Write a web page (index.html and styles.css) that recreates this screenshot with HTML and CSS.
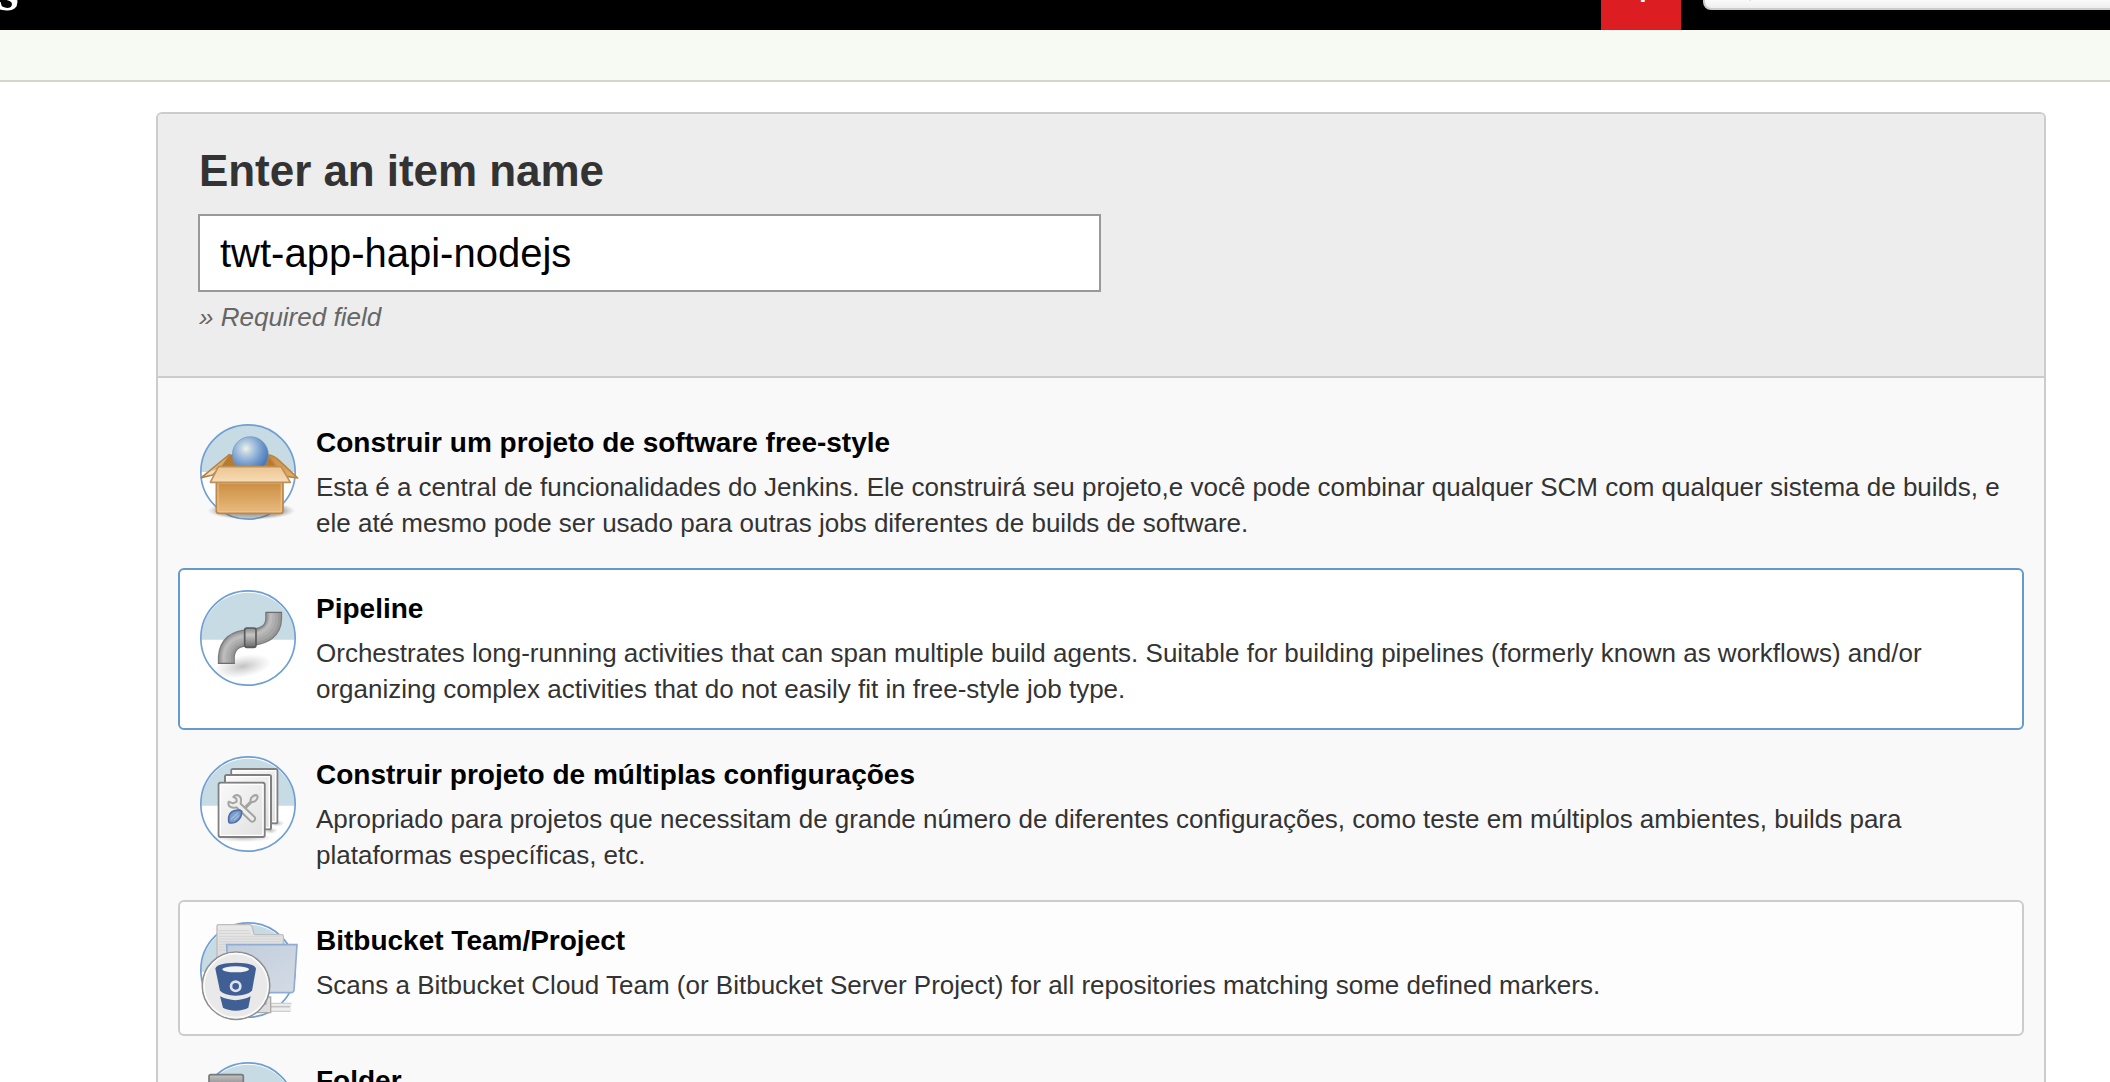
FILE: index.html
```html
<!DOCTYPE html>
<html lang="pt-BR">
<head>
<meta charset="utf-8">
<title>New Item [Jenkins]</title>
<link rel="stylesheet" href="styles.css">
</head>
<body>
<header class="topbar">
  <span class="brand">s</span>
  <span class="alerts">1</span>
  <div class="search">
    <svg class="search-icon" width="34" height="34" viewBox="0 0 34 34"><circle cx="14" cy="14" r="9" fill="none" stroke="#bbb" stroke-width="4"/><path d="M21 21l9 9" stroke="#bbb" stroke-width="5"/></svg>
  </div>
</header>
<div class="breadcrumbs"></div>
<main class="panel">
  <section class="name-section">
    <h1 class="heading"><span>Enter an item name</span></h1>
    <input class="name-input" type="text" value="twt-app-hapi-nodejs">
    <p class="hint">» Required field</p>
  </section>
  <ul class="items">
    <li class="item">
      <svg class="icon" viewBox="30 42 288 288">
        <defs>
          <linearGradient id="boxFront" x1="0" y1="0" x2="0" y2="1"><stop offset="0" stop-color="#c98b3d"/><stop offset="1" stop-color="#e9bb80"/></linearGradient>
          <linearGradient id="flap" x1="0" y1="0" x2="0" y2="1"><stop offset="0" stop-color="#ecc592"/><stop offset="1" stop-color="#f6dcb6"/></linearGradient>
          <linearGradient id="flapSide" x1="0" y1="0" x2="1" y2="1"><stop offset="0" stop-color="#c88a3c"/><stop offset="1" stop-color="#e2b274"/></linearGradient>
          <radialGradient id="ball" cx=".38" cy=".33" r=".75"><stop offset="0" stop-color="#f0f3e4"/><stop offset=".22" stop-color="#b9cfe2"/><stop offset=".6" stop-color="#7099cc"/><stop offset="1" stop-color="#3c68a8"/></radialGradient>
          <radialGradient id="shadow"><stop offset="0" stop-color="#333" stop-opacity=".6"/><stop offset=".75" stop-color="#555" stop-opacity=".4"/><stop offset="1" stop-color="#777" stop-opacity="0"/></radialGradient>
        </defs>
        <circle cx="174" cy="186" r="141" fill="#fff"/>
        <path d="M33 186a141 141 0 0 1 282 0z" fill="#c7dbe4"/>
        <circle cx="174" cy="186" r="141.500" fill="none" stroke="#6f9fd3" stroke-width="5"/>
        <ellipse cx="184" cy="302" rx="132" ry="27" fill="url(#shadow)"/>
        <path d="M118 136h117l42 48H78z" fill="#b67a30" stroke="#b67a30" stroke-width="5"/>
        <path d="M118 134L34 203l34-8 22-22z" fill="#f2dcbe" stroke="#b58147" stroke-width="5" stroke-linejoin="round"/>
        <path d="M116 138l-52 46 28-12z" fill="#d9a866"/>
        <path d="M233 135q18 0 34 16l56 53-34-5-30-27z" fill="url(#flapSide)" stroke="#b9843f" stroke-width="5" stroke-linejoin="round"/>
        <circle cx="181" cy="134" r="54" fill="url(#ball)" stroke="#7094bd" stroke-width="2"/>
        <path d="M79 212h200v90q0 8-8 8H87q-8 0-8-8z" fill="url(#boxFront)" stroke="#bd8848" stroke-width="5"/>
        <path d="M84 219h190v84q0 2-4 2H90q-6 0-6-4z" fill="none" stroke="#efc893" stroke-width="4" opacity=".65"/>
        <path d="M85 170h188l28 47H61z" fill="url(#flap)" stroke="#bf9158" stroke-width="5" stroke-linejoin="round"/>
      </svg>
      <div class="copy"><h2 class="title"><span>Construir um projeto de software free-style</span></h2>
      <p class="desc"><span>Esta é a central de funcionalidades do Jenkins. Ele construirá seu projeto,e você pode combinar qualquer SCM com qualquer sistema de builds, e</span><br><span>ele até mesmo pode ser usado para outras jobs diferentes de builds de software.</span></p></div>
    </li>
    <li class="item selected">
      <svg class="icon" viewBox="30 45 288 288">
        <defs>
          <radialGradient id="soft"><stop offset="0" stop-color="#666" stop-opacity=".4"/><stop offset="1" stop-color="#888" stop-opacity="0"/></radialGradient>
          <linearGradient id="joint" x1="0" y1="0" x2="0" y2="1"><stop offset="0" stop-color="#888"/><stop offset=".35" stop-color="#c5c5c5"/><stop offset="1" stop-color="#6b6b6b"/></linearGradient>
        </defs>
        <circle cx="174" cy="189" r="141" fill="#fff"/>
        <path d="M33 194a141 141 0 0 1 282 0z" fill="#c7dbe4"/>
        <circle cx="174" cy="189" r="141.500" fill="none" stroke="#6f9fd3" stroke-width="5"/>
        <ellipse cx="158" cy="274" rx="88" ry="34" fill="url(#soft)" transform="rotate(-10 158 274)"/>
        <g fill="none">
          <path d="M109 267v-21q4-56 68-58 73-4 74-57v-20" stroke="#7c7c7c" stroke-width="51"/>
          <path d="M109 264v-18q4-56 68-58 73-4 74-57v-17" stroke="#989898" stroke-width="43"/>
          <path d="M107 263v-19q5-55 69-58 71-4 73-55v-16" stroke="#a6a6a6" stroke-width="32"/>
          <path d="M105 263v-21q6-54 69-58 69-5 72-55v-14" stroke="#b1b1b1" stroke-width="20"/>
          <path d="M102 263v-22q8-54 70-59 68-5 71-54v-13" stroke="#bcbcbc" stroke-width="9"/>
        </g>
        <path d="M84 265h50M228 112h48" stroke="#6e6e6e" stroke-width="4"/>
        <rect x="164" y="159" width="34" height="58" rx="7" fill="url(#joint)" stroke="#5a5a5a" stroke-width="5"/>
      </svg>
      <div class="copy"><h2 class="title"><span>Pipeline</span></h2>
      <p class="desc"><span>Orchestrates long-running activities that can span multiple build agents. Suitable for building pipelines (formerly known as workflows) and/or</span><br><span>organizing complex activities that do not easily fit in free-style job type.</span></p></div>
    </li>
    <li class="item">
      <svg class="icon" viewBox="30 48 288 288">
        <defs><linearGradient id="page" x1="0" y1="0" x2="1" y2="1"><stop offset="0" stop-color="#fafafa"/><stop offset="1" stop-color="#e0e0e0"/></linearGradient></defs>
        <circle cx="174" cy="192" r="141" fill="#fff"/>
        <path d="M33 197a141 141 0 0 1 282 0z" fill="#c7dbe4"/>
        <circle cx="174" cy="192" r="141.500" fill="none" stroke="#6f9fd3" stroke-width="5"/>
        <ellipse cx="262" cy="250" rx="22" ry="10" fill="url(#soft)"/><ellipse cx="242" cy="272" rx="22" ry="10" fill="url(#soft)"/><ellipse cx="160" cy="294" rx="94" ry="12" fill="url(#soft)"/>
        <g fill="url(#page)" stroke="#808080" stroke-width="6">
          <rect x="124" y="87" width="138" height="163" rx="5"/>
          <rect x="105" y="105" width="138" height="163" rx="5"/>
          <rect x="86" y="128" width="138" height="163" rx="5"/>
        </g>
        <g fill="none" stroke="#fff" stroke-width="4"><path d="M129 101V92h128v153h-10M110 124v-14h128v153h-10"/><rect x="91" y="133" width="128" height="153" rx="2"/></g>
        <g fill="none" stroke="#a3a3a0" stroke-width="6" stroke-linejoin="round">
          <path d="M150 216l32-32q-2-10 6-15 9-6 14-2 3 7-4 14-6 6-13 5l-31 32" fill="#e8e8e8"/>
          <path d="M141 165q13 3 12 17l-1 9 41 39q5 6 0 12t-12 0l-42-40q-10 3-19-2-7-5-4-15l13 5 11-5-1-9-9-5q5-6 11-6z" fill="#eee"/>
        </g>
        <path d="M116 232q3-16 18-20 15-4 21 2 0 17-10 26-9 9-21 9-8 0-8-7z" fill="#7d9ecb" stroke="#4c6fa8" stroke-width="5"/>
        <path d="M123 238l20-18M132 241l14-15" stroke="#a5bedf" stroke-width="4"/>
      </svg>
      <div class="copy"><h2 class="title"><span>Construir projeto de múltiplas configurações</span></h2>
      <p class="desc"><span>Apropriado para projetos que necessitam de grande número de diferentes configurações, como teste em múltiplos ambientes, builds para</span><br><span>plataformas específicas, etc.</span></p></div>
    </li>
    <li class="item hovered">
      <svg class="icon" viewBox="30 36 288 288">
        <defs>
          <linearGradient id="folderBack" x1="0" y1="0" x2="0" y2="1"><stop offset="0" stop-color="#e9e9e9"/><stop offset="1" stop-color="#cfcfcf"/></linearGradient>
          <linearGradient id="folderFront" x1="0" y1="0" x2="1" y2="1"><stop offset="0" stop-color="#c1cddc"/><stop offset="1" stop-color="#d3dbe4"/></linearGradient>
        </defs>
        <circle cx="174" cy="180" r="141" fill="#fff"/>
        <path d="M33 185a141 141 0 0 1 282 0z" fill="#c7dbe4"/>
        <circle cx="174" cy="180" r="141.500" fill="none" stroke="#6f9fd3" stroke-width="5"/>
        <path d="M190 279h114v27H190z" fill="#ededed"/>
        <path d="M190 280h114M190 304h110" stroke="#cecece" stroke-width="4"/><path d="M240 290h60" stroke="#c4c4c4" stroke-width="5"/>
        <path d="M196 308v-26h32v-21h14v47z" fill="#ddd" stroke="#aaa" stroke-width="4"/>
        <path d="M81 48q0-4 4-4h94q5 0 7 5l6 22q1 3 5 3h79q4 0 4 5v160H81z" fill="url(#folderBack)" stroke="#bdbdbd" stroke-width="4"/>
        <path d="M86 62h92M86 70h96M86 79h188M86 87h188M86 95h188M86 103h30M86 111h24M86 119h24" stroke="#d3d3d3" stroke-width="3"/>
        <path d="M110 104h211l-9 136q-1 8-9 8H117z" fill="url(#folderFront)" stroke="#91acd2" stroke-width="5"/>
        <circle cx="138" cy="227" r="101" fill="#e9e9e9" stroke="#909090" stroke-width="5"/>
        <circle cx="138" cy="227" r="96" fill="none" stroke="#fafafa" stroke-width="5"/>
        <path d="M76 176q3-17 62-18 57 1 60 18l-12 66q-14 14-49 15-33-1-47-15z" fill="#405f94"/>
        <ellipse cx="137" cy="178" rx="40" ry="9" fill="#f2f3f5"/>
        <circle cx="137" cy="229" r="14" fill="#405f94" stroke="#dfe4ec" stroke-width="8"/>
        <path d="M90 259q47 23 92 0l-7 34q-14 8-38 9-24-1-38-9z" fill="#405f94"/>
      </svg>
      <div class="copy"><h2 class="title"><span>Bitbucket Team/Project</span></h2>
      <p class="desc"><span>Scans a Bitbucket Cloud Team (or Bitbucket Server Project) for all repositories matching some defined markers.</span></p></div>
    </li>
    <li class="item">
      <svg class="icon" viewBox="30 456 288 288">
        <defs><linearGradient id="tab" x1="0" y1="0" x2="0" y2="1"><stop offset="0" stop-color="#c4c4c4"/><stop offset=".25" stop-color="#858585"/><stop offset="1" stop-color="#ababab"/></linearGradient></defs>
        <circle cx="174" cy="600" r="141" fill="#fff"/>
        <path d="M33 605a141 141 0 0 1 282 0z" fill="#c7dbe4"/>
        <circle cx="174" cy="600" r="141.500" fill="none" stroke="#6f9fd3" stroke-width="5"/>
        <path d="M57 640V500q0-6 6-6h91q6 0 6 6v24h120v116z" fill="url(#tab)" stroke="#787878" stroke-width="5"/>
      </svg>
      <div class="copy"><h2 class="title"><span>Folder</span></h2></div>
    </li>
  </ul>
</main>
</body>
</html>
```
FILE: styles.css
```css
* { box-sizing: border-box; }
html, body { height: 100%; }
body {
  display: flex;
  flex-direction: column;
  margin: 0;
  overflow: hidden;
  background: #fff;
  font-family: "Liberation Sans", Helvetica, Arial, sans-serif;
  color: #333;
}
h1, h2, p, ul { margin: 0; padding: 0; }

.topbar {
  display: flex;
  flex: none;
  align-items: flex-end;
  height: 30px;
  overflow: hidden;
  background: #000;
  color: #fff;
}
.brand {
  width: 1601px;
  height: 60px;
  text-indent: -3px;
  font: bold 56px/60px "Liberation Serif", Georgia, serif;
  margin-bottom: 9px;
}
.alerts {
  width: 80px;
  height: 60px;
  padding-left: 1px;
  background: #dc1d21;
  text-align: center;
  font: bold 24px/46px "Open Sans", sans-serif;
}
.search {
  flex: 1;
  height: 50px;
  margin: 0 -20px 20px 22px;
  padding: 7px 17px;
  border: 2px solid #ccc;
  border-radius: 8px;
  background: linear-gradient(#fff 76%, #eee);
}
.search-icon { display: block; }

.breadcrumbs {
  flex: none;
  height: 52px;
  background: #f6faf2;
  border-bottom: 2px solid #d3d6cc;
}

.panel {
  flex: 1;
  min-height: 0;
  width: 1890px;
  margin: 30px 0 0 156px;
  border: 2px solid #ccc;
  border-bottom: 0;
  border-radius: 6px 6px 0 0;
  background: #f9f9f9;
  overflow: hidden;
}
.name-section {
  height: 264px;
  padding: 30px 40px 0;
  background: #ededed;
  border-bottom: 2px solid #ccc;
}
.heading {
  height: 70px;
  padding-left: 1px;
  font-size: 44px;
  line-height: 54px;
  letter-spacing: -0.05px;
}
.name-input {
  display: block;
  width: 903px;
  height: 78px;
  padding: 0 20px;
  border: 2px solid #999;
  background: #fff;
  color: #000;
  font: 40px "Liberation Sans", Helvetica, Arial, sans-serif;
  outline: none;
}
.hint {
  margin-top: 7px;
  padding-left: 1px;
  color: #666;
  font-size: 26px;
  font-style: italic;
  line-height: 36px;
}

.items {
  display: flex;
  flex-direction: column;
  gap: 4px;
  padding: 24px 20px;
  list-style: none;
}
.item {
  display: flex;
  gap: 20px;
  min-height: 136px;
  padding: 20px 20px 16px;
  border: 2px solid transparent;
  border-radius: 6px;
}
.item.selected { background: #fff; border-color: #69c; }
.item.hovered { background: #fdfdfd; border-color: #ccc; }
.icon {
  flex: none;
  width: 96px;
  height: 96px;
  overflow: visible;
}
.title {
  height: 45px;
  padding-top: 1px;
  color: #000;
  font-size: 28px;
  line-height: 36px;
}
.desc {
  height: 77px;
  font-size: 26px;
  line-height: 36px;
  white-space: nowrap;
}
.hovered .desc { height: 51px; }
```
